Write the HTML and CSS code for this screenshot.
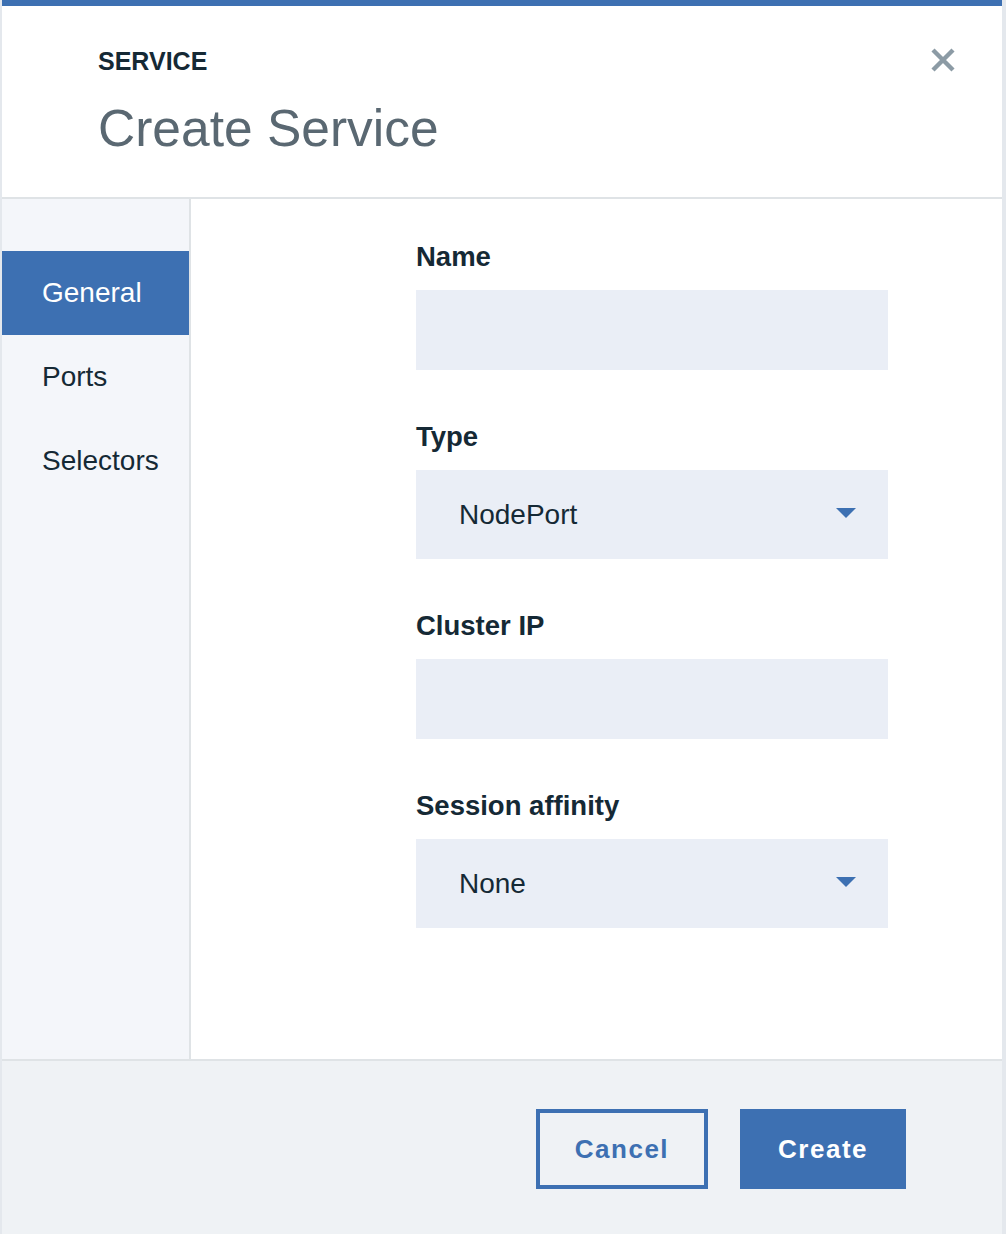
FILE: index.html
```html
<!DOCTYPE html>
<html lang="en">
<head>
<meta charset="utf-8">
<title>Create Service</title>
<link rel="stylesheet" href="styles.css">
</head>
<body>
<div class="modal">
  <header class="modal-header">
    <div class="heading">
      <div class="eyebrow">SERVICE</div>
      <h1 class="title">Create Service</h1>
    </div>
    <button class="close" aria-label="Close">
      <svg width="24" height="24" viewBox="0 0 24 24"><path d="M2 2 L22 22 M22 2 L2 22" stroke="#8c9ba5" stroke-width="4.4" stroke-linecap="butt" fill="none"/></svg>
    </button>
  </header>
  <div class="modal-body">
    <nav class="sidebar">
      <div class="nav-item active">General</div>
      <div class="nav-item">Ports</div>
      <div class="nav-item">Selectors</div>
    </nav>
    <section class="form">
      <div class="group">
        <div class="label">Name</div>
        <div class="input"></div>
      </div>
      <div class="group">
        <div class="label">Type</div>
        <div class="select"><span>NodePort</span><svg class="caret" width="20" height="10" viewBox="0 0 20 10"><path d="M0 0 H20 L10 10 Z" fill="#3d70b2"/></svg></div>
      </div>
      <div class="group">
        <div class="label">Cluster IP</div>
        <div class="input"></div>
      </div>
      <div class="group">
        <div class="label">Session affinity</div>
        <div class="select"><span>None</span><svg class="caret" width="20" height="10" viewBox="0 0 20 10"><path d="M0 0 H20 L10 10 Z" fill="#3d70b2"/></svg></div>
      </div>
    </section>
  </div>
  <footer class="modal-footer">
    <button class="btn btn-secondary">Cancel</button>
    <button class="btn btn-primary">Create</button>
  </footer>
</div>
</body>
</html>
```
FILE: styles.css
```css
* { box-sizing: border-box; }
html, body { margin: 0; padding: 0; }
body {
  background: #e4e8ed;
  font-family: "Liberation Sans", Arial, Helvetica, sans-serif;
  color: #152935;
  height: 1234px;
  overflow: hidden;
}
.modal {
  margin-left: 2px;
  width: 1000px;
  background: #fff;
  border-top: 6px solid #3d70b2;
  display: flex;
  flex-direction: column;
}
.modal-header {
  display: flex;
  justify-content: space-between;
  align-items: flex-start;
  padding: 40px 47px 39px 96px;
  border-bottom: 2px solid #dfe3e6;
}
.eyebrow {
  font-size: 25px;
  font-weight: 700;
  line-height: 30px;
  color: #152935;
}
.title {
  margin: 22px 0 0;
  font-size: 51.5px;
  font-weight: 400;
  line-height: 60px;
  color: #5a6872;
}
.close {
  border: 0;
  background: none;
  padding: 0;
  margin-top: 2px;
  width: 24px;
  height: 24px;
  display: block;
}
.close svg { display: block; }
.modal-body {
  display: flex;
  height: 860px;
}
.sidebar {
  width: 189px;
  flex: none;
  background: #f4f6fa;
  border-right: 2px solid #dfe3e6;
  padding-top: 52px;
}
.nav-item {
  height: 84px;
  display: flex;
  align-items: center;
  padding-left: 40px;
  font-size: 28px;
  color: #152935;
}
.nav-item.active {
  background: #3d70b2;
  color: #fff;
}
.form {
  flex: 1;
  padding: 43px 0 0 225px;
}
.group + .group { margin-top: 52px; }
.label {
  font-size: 27.5px;
  font-weight: 700;
  line-height: 30px;
  margin-bottom: 18px;
  color: #152935;
}
.input {
  width: 472px;
  height: 80px;
  background: #eaeef6;
}
.select {
  width: 472px;
  height: 89px;
  background: #eaeef6;
  display: flex;
  align-items: center;
  justify-content: space-between;
  padding: 0 32px 0 43px;
  font-size: 28px;
  color: #152935;
}
.caret { display: block; margin-top: -4px; }
.modal-footer {
  background: #eff2f5;
  border-top: 2px solid #dfe3e6;
  height: 175px;
  display: flex;
  justify-content: flex-end;
  align-items: flex-start;
  gap: 32px;
  padding: 48px 96px 0 0;
}
.btn {
  height: 80px;
  border: 4px solid #3d70b2;
  padding: 0 34px;
  font-family: "Liberation Sans", Arial, Helvetica, sans-serif;
  font-size: 26px;
  font-weight: 700;
  letter-spacing: 1.5px;
}
.btn-secondary {
  background: transparent;
  color: #3d70b2;
  padding: 0 35px;
}
.btn-primary {
  background: #3d70b2;
  color: #fff;
}
```
